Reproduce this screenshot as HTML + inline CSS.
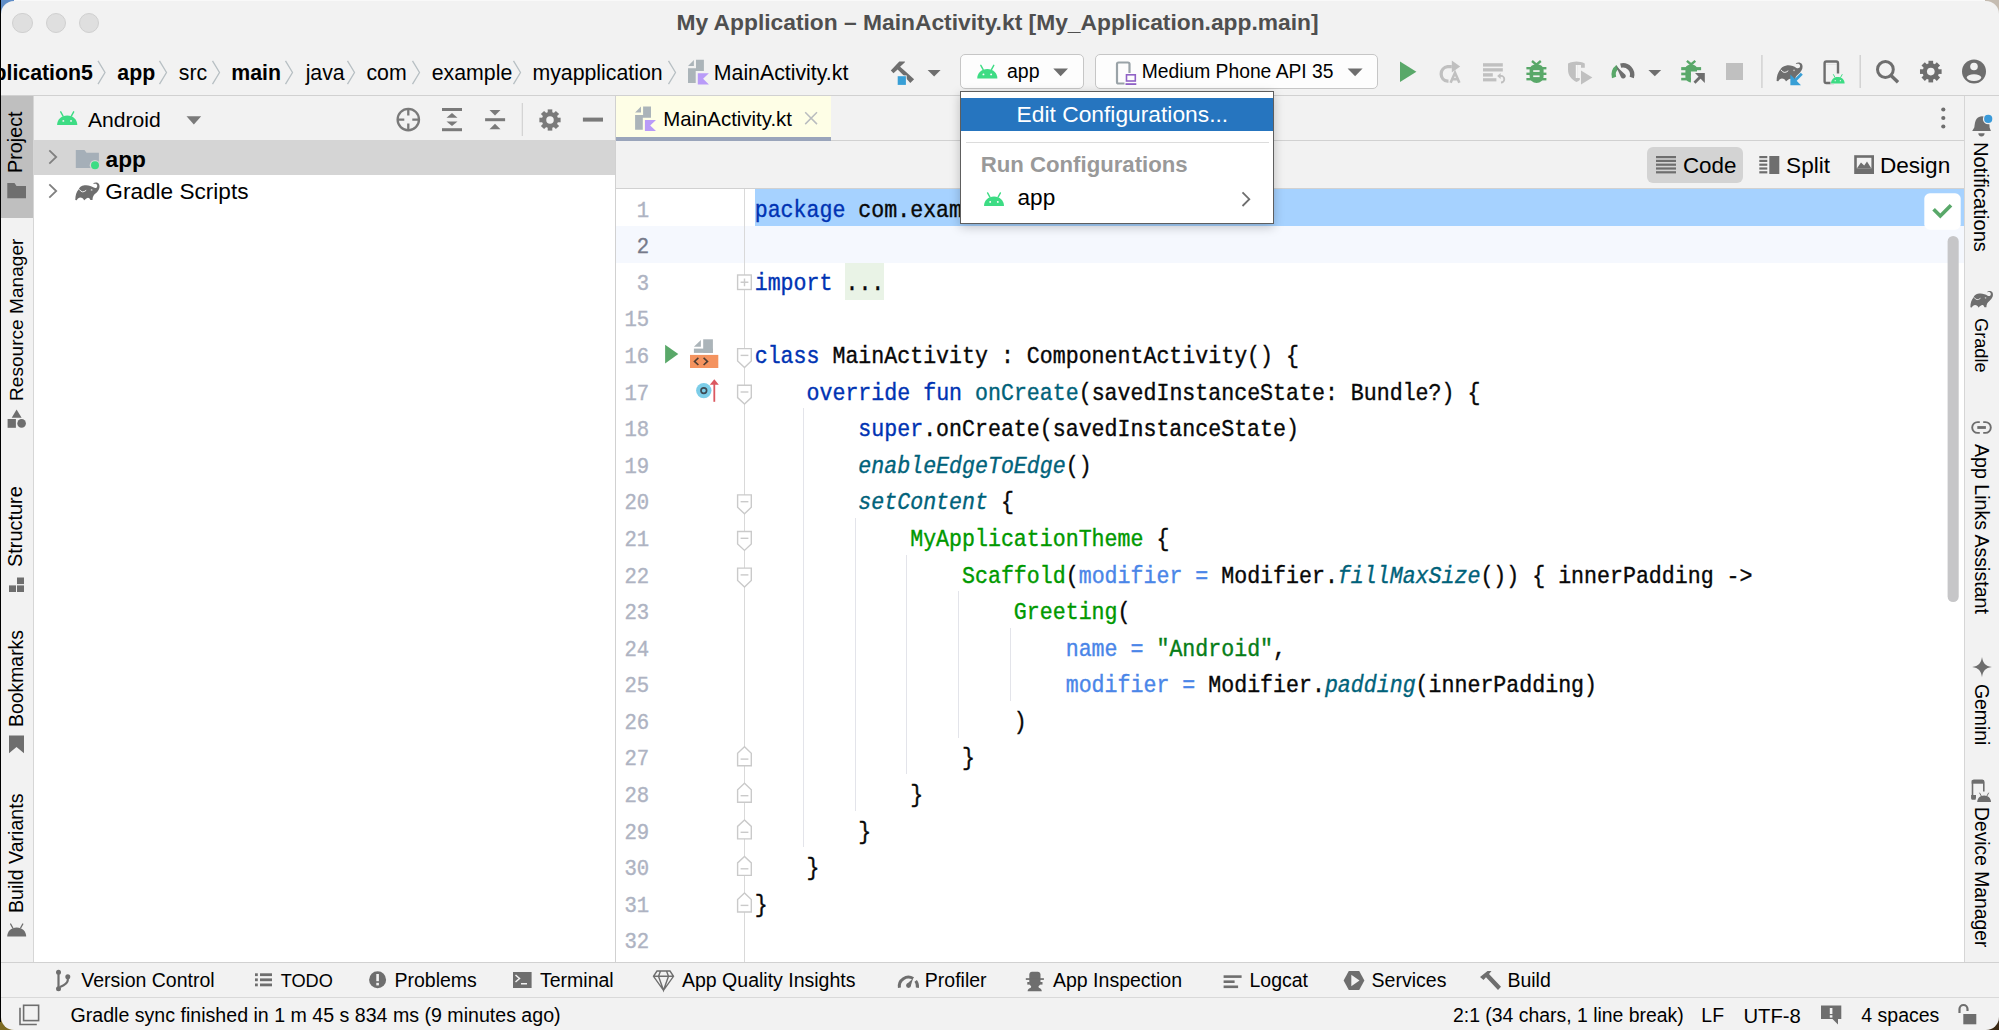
<!DOCTYPE html>
<html><head><meta charset="utf-8"><title>Android Studio</title>
<style>
html,body{margin:0;padding:0;}
body{width:1999px;height:1030px;overflow:hidden;position:relative;background:#f2f2f2;font-family:'Liberation Sans', sans-serif;}
.code{position:absolute;font-family:'Liberation Mono', monospace;white-space:pre;color:#080808;-webkit-text-stroke:0.35px currentColor;}
.code span{-webkit-text-stroke:0.35px currentColor;}
</style></head><body>
<div style="position:absolute;left:1px;top:0px;width:16px;height:16px;background:#5f8dc7;"></div>
<div style="position:absolute;left:1983px;top:0px;width:16px;height:16px;background:#c5bcb1;"></div>
<div style="position:absolute;left:0px;top:1014px;width:16px;height:16px;background:#7d6b22;"></div>
<div style="position:absolute;left:1983px;top:1014px;width:16px;height:16px;background:#3b2a14;"></div>
<div style="position:absolute;left:1px;top:1px;width:1998px;height:1029px;background:#f2f2f2;border-radius:13px;"></div>
<div style="position:absolute;left:0px;top:0px;width:1px;height:1022px;background:#000;"></div>
<div style="position:absolute;left:14px;top:0px;width:1971px;height:1px;background:#f9f9f9;"></div>
<div style="position:absolute;left:12.2px;top:12.9px;width:18.4px;height:18.4px;border-radius:50%;background:#dfdfdf;border:0.8px solid #d0d0d0;"></div>
<div style="position:absolute;left:45.8px;top:12.9px;width:18.4px;height:18.4px;border-radius:50%;background:#dfdfdf;border:0.8px solid #d0d0d0;"></div>
<div style="position:absolute;left:78.8px;top:12.9px;width:18.4px;height:18.4px;border-radius:50%;background:#dfdfdf;border:0.8px solid #d0d0d0;"></div>
<div style="position:absolute;left:676.43px;top:11.20px;font-family:'Liberation Sans';font-size:22.8px;line-height:22.8px;font-weight:700;color:#4f4f4f;white-space:pre;">My Application – MainActivity.kt [My_Application.app.main]</div>
<div style="position:absolute;left:1px;top:95px;width:1998px;height:1px;background:#d1d1d1;"></div>
<div style="position:absolute;left:33px;top:96px;width:1px;height:866px;background:#d6d6d6;"></div>
<div style="position:absolute;left:1px;top:96px;width:32px;height:122px;background:#bfbfbf;"></div>
<div style="position:absolute;left:34px;top:140px;width:581px;height:822px;background:#ffffff;"></div>
<div style="position:absolute;left:34px;top:140px;width:581px;height:35px;background:#d5d5d5;"></div>
<div style="position:absolute;left:615px;top:96px;width:1px;height:866px;background:#d1d1d1;"></div>
<div style="position:absolute;left:616px;top:96px;width:215px;height:41px;background:#fefee6;"></div>
<div style="position:absolute;left:616px;top:137px;width:215px;height:4px;background:#9aa5bb;"></div>
<div style="position:absolute;left:831px;top:140px;width:1133px;height:1px;background:#d1d1d1;"></div>
<div style="position:absolute;left:616px;top:188px;width:1348px;height:1px;background:#d1d1d1;"></div>
<div style="position:absolute;left:616px;top:189px;width:1348px;height:773px;background:#ffffff;"></div>
<div style="position:absolute;left:1964px;top:96px;width:1px;height:866px;background:#d6d6d6;"></div>
<div style="position:absolute;left:1px;top:962px;width:1998px;height:1px;background:#d1d1d1;"></div>
<div style="position:absolute;left:1px;top:997px;width:1998px;height:1px;background:#d9d9d9;"></div>
<div style="position:absolute;left:-6.56px;top:62.77px;font-family:'Liberation Sans';font-size:21.3px;line-height:21.3px;font-weight:700;color:#000;white-space:pre;">plication5</div>
<div style="position:absolute;left:117.37px;top:62.77px;font-family:'Liberation Sans';font-size:21.3px;line-height:21.3px;font-weight:700;color:#000;white-space:pre;">app</div>
<div style="position:absolute;left:178.87px;top:62.77px;font-family:'Liberation Sans';font-size:21.3px;line-height:21.3px;font-weight:400;color:#000;white-space:pre;">src</div>
<div style="position:absolute;left:231.32px;top:62.77px;font-family:'Liberation Sans';font-size:21.3px;line-height:21.3px;font-weight:700;color:#000;white-space:pre;">main</div>
<div style="position:absolute;left:305.64px;top:62.77px;font-family:'Liberation Sans';font-size:21.3px;line-height:21.3px;font-weight:400;color:#000;white-space:pre;">java</div>
<div style="position:absolute;left:366.45px;top:62.77px;font-family:'Liberation Sans';font-size:21.3px;line-height:21.3px;font-weight:400;color:#000;white-space:pre;">com</div>
<div style="position:absolute;left:431.75px;top:62.77px;font-family:'Liberation Sans';font-size:21.3px;line-height:21.3px;font-weight:400;color:#000;white-space:pre;">example</div>
<div style="position:absolute;left:532.42px;top:62.77px;font-family:'Liberation Sans';font-size:21.3px;line-height:21.3px;font-weight:400;color:#000;white-space:pre;">myapplication</div>
<div style="position:absolute;left:713.80px;top:62.77px;font-family:'Liberation Sans';font-size:21.3px;line-height:21.3px;font-weight:400;color:#000;white-space:pre;">MainActivity.kt</div>
<div style="position:absolute;left:959.5px;top:53.5px;width:122px;height:33px;border:1.5px solid #c6c6c6;border-radius:5px;background:#fdfdfd;"></div>
<div style="position:absolute;left:1094.5px;top:53.5px;width:281px;height:33px;border:1.5px solid #c6c6c6;border-radius:5px;background:#fdfdfd;"></div>
<div style="position:absolute;left:1007.02px;top:61.89px;font-family:'Liberation Sans';font-size:19.5px;line-height:19.5px;font-weight:400;color:#000;white-space:pre;">app</div>
<div style="position:absolute;left:1141.66px;top:62.16px;font-family:'Liberation Sans';font-size:19.3px;line-height:19.3px;font-weight:400;color:#000;white-space:pre;">Medium Phone API 35</div>
<div style="position:absolute;left:88.00px;top:109.44px;font-family:'Liberation Sans';font-size:21.1px;line-height:21.1px;font-weight:400;color:#000;white-space:pre;">Android</div>
<div style="position:absolute;left:105.55px;top:147.98px;font-family:'Liberation Sans';font-size:22.7px;line-height:22.7px;font-weight:700;color:#000;white-space:pre;">app</div>
<div style="position:absolute;left:105.37px;top:181.07px;font-family:'Liberation Sans';font-size:22.6px;line-height:22.6px;font-weight:400;color:#000;white-space:pre;">Gradle Scripts</div>
<div style="position:absolute;left:663.17px;top:108.53px;font-family:'Liberation Sans';font-size:20.4px;line-height:20.4px;font-weight:400;color:#000;white-space:pre;">MainActivity.kt</div>
<div style="position:absolute;left:1646.5px;top:146.5px;width:96px;height:36px;border-radius:6px;background:#d3d3d3;"></div>
<div style="position:absolute;left:1682.88px;top:155.44px;font-family:'Liberation Sans';font-size:22.4px;line-height:22.4px;font-weight:400;color:#000;white-space:pre;">Code</div>
<div style="position:absolute;left:1786.10px;top:155.27px;font-family:'Liberation Sans';font-size:22.6px;line-height:22.6px;font-weight:400;color:#000;white-space:pre;">Split</div>
<div style="position:absolute;left:1879.89px;top:155.27px;font-family:'Liberation Sans';font-size:22.6px;line-height:22.6px;font-weight:400;color:#000;white-space:pre;">Design</div>
<div style="position:absolute;left:81.30px;top:971.19px;font-family:'Liberation Sans';font-size:19.5px;line-height:19.5px;font-weight:400;color:#000;white-space:pre;">Version Control</div>
<div style="position:absolute;left:280.64px;top:972.29px;font-family:'Liberation Sans';font-size:18.2px;line-height:18.2px;font-weight:400;color:#000;white-space:pre;">TODO</div>
<div style="position:absolute;left:394.44px;top:971.19px;font-family:'Liberation Sans';font-size:19.5px;line-height:19.5px;font-weight:400;color:#000;white-space:pre;">Problems</div>
<div style="position:absolute;left:540.01px;top:971.19px;font-family:'Liberation Sans';font-size:19.5px;line-height:19.5px;font-weight:400;color:#000;white-space:pre;">Terminal</div>
<div style="position:absolute;left:682.00px;top:971.19px;font-family:'Liberation Sans';font-size:19.5px;line-height:19.5px;font-weight:400;color:#000;white-space:pre;">App Quality Insights</div>
<div style="position:absolute;left:924.84px;top:971.19px;font-family:'Liberation Sans';font-size:19.5px;line-height:19.5px;font-weight:400;color:#000;white-space:pre;">Profiler</div>
<div style="position:absolute;left:1053.00px;top:971.19px;font-family:'Liberation Sans';font-size:19.5px;line-height:19.5px;font-weight:400;color:#000;white-space:pre;">App Inspection</div>
<div style="position:absolute;left:1249.44px;top:971.19px;font-family:'Liberation Sans';font-size:19.5px;line-height:19.5px;font-weight:400;color:#000;white-space:pre;">Logcat</div>
<div style="position:absolute;left:1371.62px;top:971.19px;font-family:'Liberation Sans';font-size:19.5px;line-height:19.5px;font-weight:400;color:#000;white-space:pre;">Services</div>
<div style="position:absolute;left:1507.44px;top:971.19px;font-family:'Liberation Sans';font-size:19.5px;line-height:19.5px;font-weight:400;color:#000;white-space:pre;">Build</div>
<div style="position:absolute;left:70.52px;top:1006.11px;font-family:'Liberation Sans';font-size:19.6px;line-height:19.6px;font-weight:400;color:#000;white-space:pre;">Gradle sync finished in 1 m 45 s 834 ms (9 minutes ago)</div>
<div style="position:absolute;left:1453.03px;top:1006.28px;font-family:'Liberation Sans';font-size:19.4px;line-height:19.4px;font-weight:400;color:#000;white-space:pre;">2:1 (34 chars, 1 line break)</div>
<div style="position:absolute;left:1701.35px;top:1006.28px;font-family:'Liberation Sans';font-size:19.4px;line-height:19.4px;font-weight:400;color:#000;white-space:pre;">LF</div>
<div style="position:absolute;left:1743.38px;top:1005.52px;font-family:'Liberation Sans';font-size:20.3px;line-height:20.3px;font-weight:400;color:#000;white-space:pre;">UTF-8</div>
<div style="position:absolute;left:1861.31px;top:1006.19px;font-family:'Liberation Sans';font-size:19.5px;line-height:19.5px;font-weight:400;color:#000;white-space:pre;">4 spaces</div>
<div style="position:absolute;left:6.44px;top:173.28px;transform:rotate(-90deg);transform-origin:0 0;font-family:'Liberation Sans';font-size:19.8px;line-height:19.8px;font-weight:400;color:#000;white-space:pre;">Project</div>
<div style="position:absolute;left:7.03px;top:400.93px;transform:rotate(-90deg);transform-origin:0 0;font-family:'Liberation Sans';font-size:19.1px;line-height:19.1px;font-weight:400;color:#000;white-space:pre;">Resource Manager</div>
<div style="position:absolute;left:6.35px;top:566.70px;transform:rotate(-90deg);transform-origin:0 0;font-family:'Liberation Sans';font-size:19.9px;line-height:19.9px;font-weight:400;color:#000;white-space:pre;">Structure</div>
<div style="position:absolute;left:6.78px;top:726.95px;transform:rotate(-90deg);transform-origin:0 0;font-family:'Liberation Sans';font-size:19.4px;line-height:19.4px;font-weight:400;color:#000;white-space:pre;">Bookmarks</div>
<div style="position:absolute;left:6.61px;top:913.47px;transform:rotate(-90deg);transform-origin:0 0;font-family:'Liberation Sans';font-size:19.6px;line-height:19.6px;font-weight:400;color:#000;white-space:pre;">Build Variants</div>
<div style="position:absolute;left:1991.30px;top:142.18px;transform:rotate(90deg);transform-origin:0 0;font-family:'Liberation Sans';font-size:20.2px;line-height:20.2px;font-weight:400;color:#000;white-space:pre;">Notifications</div>
<div style="position:absolute;left:1989.61px;top:318.39px;transform:rotate(90deg);transform-origin:0 0;font-family:'Liberation Sans';font-size:18.2px;line-height:18.2px;font-weight:400;color:#000;white-space:pre;">Gradle</div>
<div style="position:absolute;left:1990.79px;top:443.50px;transform:rotate(90deg);transform-origin:0 0;font-family:'Liberation Sans';font-size:19.6px;line-height:19.6px;font-weight:400;color:#000;white-space:pre;">App Links Assistant</div>
<div style="position:absolute;left:1990.62px;top:684.03px;transform:rotate(90deg);transform-origin:0 0;font-family:'Liberation Sans';font-size:19.4px;line-height:19.4px;font-weight:400;color:#000;white-space:pre;">Gemini</div>
<div style="position:absolute;left:1990.54px;top:807.46px;transform:rotate(90deg);transform-origin:0 0;font-family:'Liberation Sans';font-size:19.3px;line-height:19.3px;font-weight:400;color:#000;white-space:pre;">Device Manager</div>
<div style="position:absolute;left:616px;top:226px;width:1348px;height:37px;background:#f5f8fe;"></div>
<div style="position:absolute;left:754.7px;top:189.0px;width:1209.3px;height:36.58px;background:#a6d2ff;"></div>
<div style="position:absolute;left:845px;top:263.2px;width:39px;height:36.4px;background:#e9f3e6;"></div>
<div class="code" style="left:754.7px;top:192.75px;font-size:21.6px;line-height:36.58px;transform:scaleY(1.07);transform-origin:0 24.05px;"><span style="color:#0033b3">package</span><span style="color:#080808"> com.example.myapplication</span></div>
<div class="code" style="left:560px;width:89.20000000000005px;text-align:right;top:193.75px;font-size:20.6px;line-height:36.58px;color:#aeb3c2;transform:scaleY(1.07);transform-origin:0 24.05px;">1</div>
<div class="code" style="left:560px;width:89.20000000000005px;text-align:right;top:230.33px;font-size:20.6px;line-height:36.58px;color:#767a8a;transform:scaleY(1.07);transform-origin:0 24.05px;">2</div>
<div class="code" style="left:754.7px;top:265.91px;font-size:21.6px;line-height:36.58px;transform:scaleY(1.07);transform-origin:0 24.05px;"><span style="color:#0033b3">import</span><span style="color:#080808"> </span><span style="color:#080808">...</span></div>
<div class="code" style="left:560px;width:89.20000000000005px;text-align:right;top:266.91px;font-size:20.6px;line-height:36.58px;color:#aeb3c2;transform:scaleY(1.07);transform-origin:0 24.05px;">3</div>
<div class="code" style="left:560px;width:89.20000000000005px;text-align:right;top:303.49px;font-size:20.6px;line-height:36.58px;color:#aeb3c2;transform:scaleY(1.07);transform-origin:0 24.05px;">15</div>
<div class="code" style="left:754.7px;top:339.07px;font-size:21.6px;line-height:36.58px;transform:scaleY(1.07);transform-origin:0 24.05px;"><span style="color:#0033b3">class</span><span style="color:#080808"> MainActivity : ComponentActivity() {</span></div>
<div class="code" style="left:560px;width:89.20000000000005px;text-align:right;top:340.07px;font-size:20.6px;line-height:36.58px;color:#aeb3c2;transform:scaleY(1.07);transform-origin:0 24.05px;">16</div>
<div class="code" style="left:754.7px;top:375.65px;font-size:21.6px;line-height:36.58px;transform:scaleY(1.07);transform-origin:0 24.05px;"><span style="color:#080808">    </span><span style="color:#0033b3">override</span><span style="color:#080808"> </span><span style="color:#0033b3">fun</span><span style="color:#080808"> </span><span style="color:#00627a">onCreate</span><span style="color:#080808">(savedInstanceState: Bundle?) {</span></div>
<div class="code" style="left:560px;width:89.20000000000005px;text-align:right;top:376.65px;font-size:20.6px;line-height:36.58px;color:#aeb3c2;transform:scaleY(1.07);transform-origin:0 24.05px;">17</div>
<div class="code" style="left:754.7px;top:412.23px;font-size:21.6px;line-height:36.58px;transform:scaleY(1.07);transform-origin:0 24.05px;"><span style="color:#080808">        </span><span style="color:#0033b3">super</span><span style="color:#080808">.onCreate(savedInstanceState)</span></div>
<div class="code" style="left:560px;width:89.20000000000005px;text-align:right;top:413.23px;font-size:20.6px;line-height:36.58px;color:#aeb3c2;transform:scaleY(1.07);transform-origin:0 24.05px;">18</div>
<div class="code" style="left:754.7px;top:448.81px;font-size:21.6px;line-height:36.58px;transform:scaleY(1.07);transform-origin:0 24.05px;"><span style="color:#080808">        </span><span style="color:#00627a;font-style:italic">enableEdgeToEdge</span><span style="color:#080808">()</span></div>
<div class="code" style="left:560px;width:89.20000000000005px;text-align:right;top:449.81px;font-size:20.6px;line-height:36.58px;color:#aeb3c2;transform:scaleY(1.07);transform-origin:0 24.05px;">19</div>
<div class="code" style="left:754.7px;top:485.39px;font-size:21.6px;line-height:36.58px;transform:scaleY(1.07);transform-origin:0 24.05px;"><span style="color:#080808">        </span><span style="color:#00627a;font-style:italic">setContent</span><span style="color:#080808"> {</span></div>
<div class="code" style="left:560px;width:89.20000000000005px;text-align:right;top:486.39px;font-size:20.6px;line-height:36.58px;color:#aeb3c2;transform:scaleY(1.07);transform-origin:0 24.05px;">20</div>
<div class="code" style="left:754.7px;top:521.97px;font-size:21.6px;line-height:36.58px;transform:scaleY(1.07);transform-origin:0 24.05px;"><span style="color:#080808">            </span><span style="color:#009900">MyApplicationTheme</span><span style="color:#080808"> {</span></div>
<div class="code" style="left:560px;width:89.20000000000005px;text-align:right;top:522.97px;font-size:20.6px;line-height:36.58px;color:#aeb3c2;transform:scaleY(1.07);transform-origin:0 24.05px;">21</div>
<div class="code" style="left:754.7px;top:558.55px;font-size:21.6px;line-height:36.58px;transform:scaleY(1.07);transform-origin:0 24.05px;"><span style="color:#080808">                </span><span style="color:#009900">Scaffold</span><span style="color:#080808">(</span><span style="color:#4a86e8">modifier =</span><span style="color:#080808"> Modifier.</span><span style="color:#00627a;font-style:italic">fillMaxSize</span><span style="color:#080808">()) { innerPadding -&gt;</span></div>
<div class="code" style="left:560px;width:89.20000000000005px;text-align:right;top:559.55px;font-size:20.6px;line-height:36.58px;color:#aeb3c2;transform:scaleY(1.07);transform-origin:0 24.05px;">22</div>
<div class="code" style="left:754.7px;top:595.13px;font-size:21.6px;line-height:36.58px;transform:scaleY(1.07);transform-origin:0 24.05px;"><span style="color:#080808">                    </span><span style="color:#009900">Greeting</span><span style="color:#080808">(</span></div>
<div class="code" style="left:560px;width:89.20000000000005px;text-align:right;top:596.13px;font-size:20.6px;line-height:36.58px;color:#aeb3c2;transform:scaleY(1.07);transform-origin:0 24.05px;">23</div>
<div class="code" style="left:754.7px;top:631.71px;font-size:21.6px;line-height:36.58px;transform:scaleY(1.07);transform-origin:0 24.05px;"><span style="color:#080808">                        </span><span style="color:#4a86e8">name =</span><span style="color:#080808"> </span><span style="color:#067d17">&quot;Android&quot;</span><span style="color:#080808">,</span></div>
<div class="code" style="left:560px;width:89.20000000000005px;text-align:right;top:632.71px;font-size:20.6px;line-height:36.58px;color:#aeb3c2;transform:scaleY(1.07);transform-origin:0 24.05px;">24</div>
<div class="code" style="left:754.7px;top:668.29px;font-size:21.6px;line-height:36.58px;transform:scaleY(1.07);transform-origin:0 24.05px;"><span style="color:#080808">                        </span><span style="color:#4a86e8">modifier =</span><span style="color:#080808"> Modifier.</span><span style="color:#00627a;font-style:italic">padding</span><span style="color:#080808">(innerPadding)</span></div>
<div class="code" style="left:560px;width:89.20000000000005px;text-align:right;top:669.29px;font-size:20.6px;line-height:36.58px;color:#aeb3c2;transform:scaleY(1.07);transform-origin:0 24.05px;">25</div>
<div class="code" style="left:754.7px;top:704.87px;font-size:21.6px;line-height:36.58px;transform:scaleY(1.07);transform-origin:0 24.05px;"><span style="color:#080808">                    )</span></div>
<div class="code" style="left:560px;width:89.20000000000005px;text-align:right;top:705.87px;font-size:20.6px;line-height:36.58px;color:#aeb3c2;transform:scaleY(1.07);transform-origin:0 24.05px;">26</div>
<div class="code" style="left:754.7px;top:741.45px;font-size:21.6px;line-height:36.58px;transform:scaleY(1.07);transform-origin:0 24.05px;"><span style="color:#080808">                }</span></div>
<div class="code" style="left:560px;width:89.20000000000005px;text-align:right;top:742.45px;font-size:20.6px;line-height:36.58px;color:#aeb3c2;transform:scaleY(1.07);transform-origin:0 24.05px;">27</div>
<div class="code" style="left:754.7px;top:778.03px;font-size:21.6px;line-height:36.58px;transform:scaleY(1.07);transform-origin:0 24.05px;"><span style="color:#080808">            }</span></div>
<div class="code" style="left:560px;width:89.20000000000005px;text-align:right;top:779.03px;font-size:20.6px;line-height:36.58px;color:#aeb3c2;transform:scaleY(1.07);transform-origin:0 24.05px;">28</div>
<div class="code" style="left:754.7px;top:814.61px;font-size:21.6px;line-height:36.58px;transform:scaleY(1.07);transform-origin:0 24.05px;"><span style="color:#080808">        }</span></div>
<div class="code" style="left:560px;width:89.20000000000005px;text-align:right;top:815.61px;font-size:20.6px;line-height:36.58px;color:#aeb3c2;transform:scaleY(1.07);transform-origin:0 24.05px;">29</div>
<div class="code" style="left:754.7px;top:851.19px;font-size:21.6px;line-height:36.58px;transform:scaleY(1.07);transform-origin:0 24.05px;"><span style="color:#080808">    }</span></div>
<div class="code" style="left:560px;width:89.20000000000005px;text-align:right;top:852.19px;font-size:20.6px;line-height:36.58px;color:#aeb3c2;transform:scaleY(1.07);transform-origin:0 24.05px;">30</div>
<div class="code" style="left:754.7px;top:887.77px;font-size:21.6px;line-height:36.58px;transform:scaleY(1.07);transform-origin:0 24.05px;"><span style="color:#080808">}</span></div>
<div class="code" style="left:560px;width:89.20000000000005px;text-align:right;top:888.77px;font-size:20.6px;line-height:36.58px;color:#aeb3c2;transform:scaleY(1.07);transform-origin:0 24.05px;">31</div>
<div class="code" style="left:560px;width:89.20000000000005px;text-align:right;top:925.35px;font-size:20.6px;line-height:36.58px;color:#aeb3c2;transform:scaleY(1.07);transform-origin:0 24.05px;">32</div>
<div style="position:absolute;left:744px;top:189px;width:1.4px;height:773px;background:#d9d9d9;"></div>
<div style="position:absolute;left:802.6px;top:408.48px;width:1.2px;height:438.96px;background:#e3e4ea;"></div>
<div style="position:absolute;left:854.5px;top:518.22px;width:1.2px;height:292.64px;background:#e3e4ea;"></div>
<div style="position:absolute;left:906.3px;top:554.8px;width:1.2px;height:219.48px;background:#e3e4ea;"></div>
<div style="position:absolute;left:958.2px;top:591.38px;width:1.2px;height:146.32px;background:#e3e4ea;"></div>
<div style="position:absolute;left:1010.0px;top:627.96px;width:1.2px;height:73.16px;background:#e3e4ea;"></div>
<svg style="position:absolute;left:0;top:0" width="1999" height="1030"><polyline points="98,60.8 105,72.5 98,84.2" fill="none" stroke="#b7bfc3" stroke-width="1.3"/><polyline points="159.5,60.8 166.5,72.5 159.5,84.2" fill="none" stroke="#b7bfc3" stroke-width="1.3"/><polyline points="212.5,60.8 219.5,72.5 212.5,84.2" fill="none" stroke="#b7bfc3" stroke-width="1.3"/><polyline points="285.5,60.8 292.5,72.5 285.5,84.2" fill="none" stroke="#b7bfc3" stroke-width="1.3"/><polyline points="347.5,60.8 354.5,72.5 347.5,84.2" fill="none" stroke="#b7bfc3" stroke-width="1.3"/><polyline points="412.5,60.8 419.5,72.5 412.5,84.2" fill="none" stroke="#b7bfc3" stroke-width="1.3"/><polyline points="513.5,60.8 520.5,72.5 513.5,84.2" fill="none" stroke="#b7bfc3" stroke-width="1.3"/><polyline points="668.5,60.8 675.5,72.5 668.5,84.2" fill="none" stroke="#b7bfc3" stroke-width="1.3"/><g transform="translate(688.0,59.8) scale(1.0)"><polygon points="0,6.1 5.9,0.1 5.9,6.1" fill="#abb4b9"/><path d="M8,0 H15.9 V11.2 H7.7 V23.2 H0 V8.5 H8 Z" fill="#abb4b9"/><path d="M9.8,13.4 H20.9 L15.1,19 L20.9,24.6 H9.8 Z" fill="#b99bf8"/></g><g transform="translate(635.1,106.5) scale(1.0)"><polygon points="0,6.1 5.9,0.1 5.9,6.1" fill="#abb4b9"/><path d="M8,0 H15.9 V11.2 H7.7 V23.2 H0 V8.5 H8 Z" fill="#abb4b9"/><path d="M9.8,13.4 H20.9 L15.1,19 L20.9,24.6 H9.8 Z" fill="#b99bf8"/></g><polygon points="890.8,70.5 899.3,61.6 904.9,61.5 904.9,62.2 900.1,66.8 906.1,72 914.1,79.3 910.3,82.9 902.7,74.6 897.6,69.5 893.5,73.2" fill="#6e6e6e"/><rect x="896.9" y="75.4" width="9.8" height="10.3" fill="#f2f2f2"/><rect x="897.7" y="76.2" width="8.2" height="8.7" fill="#389fd6"/><polygon points="927.6,70.1 940.6,70.1 934.1,76.4" fill="#6e6e6e"/><g transform="translate(977.2,64.9) scale(1.0100)"><path d="M0,13.5 C0,8 4.3,4 10,4 C15.7,4 20,8 20,13.5 Z" fill="#3ddc84"/><path d="M3.6,0.4 L5.9,4.6 M16.4,0.4 L14.1,4.6" stroke="#3ddc84" stroke-width="1.4" stroke-linecap="round"/><circle cx="6.2" cy="9.4" r="0.95" fill="#fdfdfd"/><circle cx="13.8" cy="9.4" r="0.95" fill="#fdfdfd"/></g><polygon points="1053.3,68.4 1068.0,68.4 1060.65,76.2" fill="#6e6e6e"/><rect x="1117" y="62.5" width="12.5" height="21" rx="1.6" fill="none" stroke="#9aa3a8" stroke-width="2.2"/><rect x="1124.5" y="73" width="12" height="13" fill="#fdfdfd"/><rect x="1126.5" y="74.8" width="8.8" height="6.2" fill="none" stroke="#9062c6" stroke-width="1.6"/><rect x="1125.5" y="83.2" width="10.8" height="1.8" fill="#9062c6"/><polygon points="1347.6,68.4 1362.6,68.4 1355.1,76.2" fill="#6e6e6e"/><polygon points="1400,61.6 1416.4,71.8 1400,81.9" fill="#59a869"/><path d="M1451.8,66.7 H1447.6 A7.3,7.3 0 0 0 1447.6,81.2 H1448.5" fill="none" stroke="#c0c0c0" stroke-width="3.3"/><polygon points="1451.8,60.4 1460.2,66.5 1451.8,72.6" fill="#c0c0c0"/><path d="M1450.6,82.8 L1455,72.8 L1459.4,82.8 M1452.3,79.2 H1457.7" fill="none" stroke="#c0c0c0" stroke-width="2.6"/><g fill="#c0c0c0"><rect x="1483" y="63.2" width="19.8" height="3.4"/><rect x="1483" y="68.2" width="19.8" height="3.3"/><rect x="1483" y="73.2" width="9.8" height="3.4"/><rect x="1483" y="78.2" width="13.4" height="3.2"/><polygon points="1497.2,75.9 1500.6,72.9 1500.6,78.9"/></g><path d="M1499.5,75.9 H1501 A3.3,3.3 0 0 1 1501,82.5" fill="none" stroke="#c0c0c0" stroke-width="1.8"/><g transform="translate(1526.4,60.2) scale(1.0) translate(-1526.4,-60.2)" fill="#59a869"><path d="M1532,61 L1536.4,64.6 L1540.8,61" fill="none" stroke="#59a869" stroke-width="2.4"/><path d="M1529.6,70 C1529.6,66.5 1532.5,64.2 1536.6,64.2 C1540.7,64.2 1543.6,66.5 1543.6,70 V76 C1543.6,80 1540.5,82.9 1536.6,82.9 C1532.7,82.9 1529.6,80 1529.6,76 Z"/><rect x="1526.4" y="67" width="20" height="2.4"/><rect x="1526.4" y="72.6" width="20" height="2.4"/><rect x="1526.4" y="78" width="20" height="2.4"/><rect x="1533.2" y="70.2" width="6.4" height="1.7" fill="#f2f2f2"/><rect x="1533.2" y="75.4" width="6.4" height="1.7" fill="#f2f2f2"/></g><path d="M1568,63.4 C1571,62.3 1574,61.8 1576.4,61.6 C1579.5,61.8 1582,62.3 1584.8,63.4 V67.8 H1581 V65 H1577.2 V78 H1579.8 V80 C1578.7,81 1577.5,81.6 1576.4,82 C1571.5,79.5 1568,75.5 1568,69.5 Z" fill="#c0c0c0"/><rect x="1575.8" y="65" width="1.4" height="13" fill="#f7f7f7"/><polygon points="1581,70.4 1592.4,77.4 1581,84.6" fill="#c0c0c0"/><path d="M1614.06,77.47 A9.3,9.3 0 0 1 1617.70,66.89" fill="none" stroke="#59a869" stroke-width="4.4"/><path d="M1620.65,65.58 A9.3,9.3 0 0 1 1631.74,77.47" fill="none" stroke="#6e6e6e" stroke-width="4.4"/><path d="M1615.6,65.6 L1621,77.2 A2.5,2.5 0 0 0 1625.4,74.8 Z" fill="#6e6e6e"/><polygon points="1648.4,70 1661.2,70 1654.8000000000002,76.3" fill="#6e6e6e"/><g fill="#59a869"><path d="M1686.9,60.8 L1691.1,64.4 L1695.3,60.8" fill="none" stroke="#59a869" stroke-width="2.4"/><path d="M1685.4,70.2 V68.5 C1685.4,66.5 1688,64.6 1691.2,64.6 C1694.4,64.6 1697,66.5 1697,68.5 V71.5 H1690.9 V82.6 C1687.5,82 1685.4,79.5 1685.4,77 Z"/><rect x="1681.2" y="67.1" width="19.9" height="3.1"/><rect x="1681.2" y="72.6" width="9.7" height="2.7"/><rect x="1681.2" y="77.8" width="9.7" height="2.6"/></g><path d="M1694.5,82.7 L1702.2,75" stroke="#f2f2f2" stroke-width="5"/><polygon points="1693.6,72.1 1705.8,72.1 1705.8,84" fill="#f2f2f2"/><path d="M1694.5,82.7 L1702.2,75" stroke="#6e6e6e" stroke-width="2.9"/><polygon points="1695,73.1 1704.8,73.1 1704.8,82.9" fill="#6e6e6e"/><rect x="1726" y="63" width="17" height="17" fill="#c0c0c0"/><rect x="1761.2" y="55" width="1.4" height="33" fill="#d0d0d0"/><rect x="1859.5" y="55" width="1.4" height="33" fill="#d0d0d0"/><g transform="translate(1776.6,62.1) scale(1.07) translate(-3.3,-4.0)"><path fill="#6e6e6e" d="M3.3,21.7 C3.3,17 4.5,13.5 6.8,11 C7.2,9.5 9,7.6 12.6,7.1 C16,6.6 19.5,7.8 21.8,9.4 C23.5,10.3 25.5,9.5 25.2,7.2 C25,5.6 23.2,5.1 21.8,5.8 L21.2,5.3 C22.5,4 25.5,3.8 26.9,5.8 C28.5,8.5 27.2,12.5 23.5,15.3 C21.8,16.5 20.5,18.5 20.5,21.7 H18.4 C17.8,20.2 17,19.5 16,19.5 C15,19.5 13.9,20.5 12.3,22 H12 C11.5,20.5 10,19.4 8.3,19.4 C7,19.4 5.5,20.5 4.8,22 Z"/><path d="M7.4,11.2 Q10,15.6 14.2,12.1" fill="none" stroke="#f2f2f2" stroke-width="0.9"/><circle cx="19.6" cy="11.7" r="0.9" fill="#f2f2f2" opacity="0.6"/></g><rect x="1789" y="72" width="14" height="14" fill="#f2f2f2" opacity="0"/><path d="M1801.8,73.8 L1792.5,83" stroke="#389fd6" stroke-width="2.8"/><polygon points="1790.4,74.5 1790.4,85.2 1801,85.2 " fill="#389fd6"/><path d="M1834,83 H1826.3 C1825.4,83 1824.6,82.2 1824.6,81.3 V63.2 C1824.6,62.3 1825.4,61.5 1826.3,61.5 H1836.3 C1837.2,61.5 1838,62.3 1838,63.2 V74" fill="none" stroke="#6e6e6e" stroke-width="2.4"/><rect x="1826" y="64.8" width="10.6" height="0.1" fill="#6e6e6e"/><rect x="1830.5" y="73.5" width="15" height="11" fill="#f2f2f2"/><g transform="translate(1831,74.3) scale(0.6800)"><path d="M0,13.5 C0,8 4.3,4 10,4 C15.7,4 20,8 20,13.5 Z" fill="#3ddc84"/><path d="M3.6,0.4 L5.9,4.6 M16.4,0.4 L14.1,4.6" stroke="#3ddc84" stroke-width="1.4" stroke-linecap="round"/><circle cx="6.2" cy="9.4" r="0.95" fill="#f2f2f2"/><circle cx="13.8" cy="9.4" r="0.95" fill="#f2f2f2"/></g><circle cx="1885.4" cy="69.5" r="7.9" fill="none" stroke="#6e6e6e" stroke-width="3"/><path d="M1891,75.5 L1898,82.2" stroke="#6e6e6e" stroke-width="3.4"/><g transform="translate(1930.8,71.6)" fill="#6e6e6e"><circle r="8.27"/><rect x="-2.33" y="-10.81" width="4.66" height="5.30" transform="rotate(0)"/><rect x="-2.33" y="-10.81" width="4.66" height="5.30" transform="rotate(45)"/><rect x="-2.33" y="-10.81" width="4.66" height="5.30" transform="rotate(90)"/><rect x="-2.33" y="-10.81" width="4.66" height="5.30" transform="rotate(135)"/><rect x="-2.33" y="-10.81" width="4.66" height="5.30" transform="rotate(180)"/><rect x="-2.33" y="-10.81" width="4.66" height="5.30" transform="rotate(225)"/><rect x="-2.33" y="-10.81" width="4.66" height="5.30" transform="rotate(270)"/><rect x="-2.33" y="-10.81" width="4.66" height="5.30" transform="rotate(315)"/><circle r="3.82" fill="#f2f2f2"/></g><circle cx="1974" cy="71.5" r="12" fill="#6e6e6e"/><circle cx="1974" cy="66.5" r="3.8" fill="#f2f2f2"/><ellipse cx="1974" cy="77.6" rx="7.2" ry="3.4" fill="#f2f2f2"/><g transform="translate(57.1,111.4) scale(1.0100)"><path d="M0,13.5 C0,8 4.3,4 10,4 C15.7,4 20,8 20,13.5 Z" fill="#3ddc84"/><path d="M3.6,0.4 L5.9,4.6 M16.4,0.4 L14.1,4.6" stroke="#3ddc84" stroke-width="1.4" stroke-linecap="round"/><circle cx="6.2" cy="9.4" r="0.95" fill="#f2f2f2"/><circle cx="13.8" cy="9.4" r="0.95" fill="#f2f2f2"/></g><polygon points="186.5,116.2 201.2,116.2 193.85,124.6" fill="#7a7a7a"/><circle cx="408.3" cy="119.6" r="10.7" fill="none" stroke="#7a7a7a" stroke-width="2.3"/><path d="M408.3,108.5 V115.6 M408.3,123.6 V130.7 M397.2,119.6 H404.3 M412.3,119.6 H419.4" stroke="#7a7a7a" stroke-width="2.3"/><g fill="#7a7a7a"><rect x="442" y="108" width="20" height="3"/><rect x="442" y="128.2" width="20" height="3"/><polygon points="446.5,117.8 457.5,117.8 452,113.1"/><polygon points="446.5,121.4 457.5,121.4 452,126.1"/></g><g fill="#7a7a7a"><rect x="485.1" y="118.2" width="20" height="3"/><polygon points="489.5,110 500.5,110 495,115.5"/><polygon points="489.5,129.3 500.5,129.3 495,123.8"/></g><rect x="521.7" y="103" width="1.3" height="33" fill="#d4d4d4"/><g transform="translate(550,120)" fill="#7a7a7a"><circle r="8.11"/><rect x="-2.29" y="-10.61" width="4.58" height="5.20" transform="rotate(0)"/><rect x="-2.29" y="-10.61" width="4.58" height="5.20" transform="rotate(45)"/><rect x="-2.29" y="-10.61" width="4.58" height="5.20" transform="rotate(90)"/><rect x="-2.29" y="-10.61" width="4.58" height="5.20" transform="rotate(135)"/><rect x="-2.29" y="-10.61" width="4.58" height="5.20" transform="rotate(180)"/><rect x="-2.29" y="-10.61" width="4.58" height="5.20" transform="rotate(225)"/><rect x="-2.29" y="-10.61" width="4.58" height="5.20" transform="rotate(270)"/><rect x="-2.29" y="-10.61" width="4.58" height="5.20" transform="rotate(315)"/><circle r="3.74" fill="#f2f2f2"/></g><rect x="582.9" y="117.6" width="20.1" height="4" fill="#7a7a7a"/><polyline points="49.3,150.4 56.2,157 49.3,163.6" fill="none" stroke="#808080" stroke-width="1.8"/><polyline points="49.3,184.4 56.2,191 49.3,197.6" fill="none" stroke="#808080" stroke-width="1.8"/><path d="M75.8,150 H84.5 L86.5,152.8 H98.9 V168 H75.8 Z" fill="#a5afb8"/><circle cx="95" cy="165.2" r="5.3" fill="#d5d5d5"/><circle cx="95" cy="165.2" r="4" fill="#3ddc84"/><g transform="translate(75.3,182.2) scale(1.0) translate(-3.3,-4.0)"><path fill="#6e6e6e" d="M3.3,21.7 C3.3,17 4.5,13.5 6.8,11 C7.2,9.5 9,7.6 12.6,7.1 C16,6.6 19.5,7.8 21.8,9.4 C23.5,10.3 25.5,9.5 25.2,7.2 C25,5.6 23.2,5.1 21.8,5.8 L21.2,5.3 C22.5,4 25.5,3.8 26.9,5.8 C28.5,8.5 27.2,12.5 23.5,15.3 C21.8,16.5 20.5,18.5 20.5,21.7 H18.4 C17.8,20.2 17,19.5 16,19.5 C15,19.5 13.9,20.5 12.3,22 H12 C11.5,20.5 10,19.4 8.3,19.4 C7,19.4 5.5,20.5 4.8,22 Z"/><path d="M7.4,11.2 Q10,15.6 14.2,12.1" fill="none" stroke="#ffffff" stroke-width="0.9"/><circle cx="19.6" cy="11.7" r="0.9" fill="#ffffff" opacity="0.6"/></g><path d="M805.2,112.3 L817,124.1 M817,112.3 L805.2,124.1" stroke="#b9bcbf" stroke-width="1.5"/><circle cx="1943.3" cy="109.5" r="2.1" fill="#6e6e6e"/><circle cx="1943.3" cy="118" r="2.1" fill="#6e6e6e"/><circle cx="1943.3" cy="126.5" r="2.1" fill="#6e6e6e"/><g fill="#6e6e6e"><rect x="1656" y="156.0" width="20" height="2.2"/><rect x="1656" y="159.8" width="20" height="2.2"/><rect x="1656" y="163.6" width="20" height="2.2"/><rect x="1656" y="167.4" width="20" height="2.2"/><rect x="1656" y="171.2" width="20" height="2.2"/></g><g fill="#6e6e6e"><rect x="1759.3" y="156.0" width="8" height="2.2"/><rect x="1759.3" y="159.8" width="8" height="2.2"/><rect x="1759.3" y="163.6" width="8" height="2.2"/><rect x="1759.3" y="167.4" width="8" height="2.2"/><rect x="1759.3" y="171.2" width="8" height="2.2"/><rect x="1769.3" y="156" width="10" height="18"/></g><rect x="1854.2" y="155.2" width="19.8" height="18.8" fill="#6e6e6e"/><rect x="1856.8" y="157.8" width="14.6" height="10.6" fill="#f2f2f2"/><polygon points="1856.8,168.4 1861,162.6 1864.2,165.6 1867,161.6 1871.4,168.4" fill="#6e6e6e"/><rect x="1924.3" y="193.3" width="36.4" height="36.4" rx="5.5" fill="#ffffff"/><path d="M1933.6,209.3 L1940.3,216 L1951,205.3" fill="none" stroke="#59a869" stroke-width="3.7"/><rect x="1947.6" y="236" width="11.1" height="366" rx="5.5" fill="#c6c6c8"/><polygon points="665.1,344.8 678.3,354.1 665.1,363.4" fill="#59a869"/><polygon points="693.9,346.7 700.9,340.1 700.9,346.7" fill="#abb4b9"/><rect x="703.2" y="339.3" width="9.7" height="13.6" fill="#abb4b9"/><rect x="693.9" y="348.6" width="19" height="4.3" fill="#abb4b9"/><rect x="690" y="354.9" width="28.3" height="13.1" fill="#f4935f"/><path d="M698.4,357.8 L694.5,361.4 L698.4,365 M703.6,357.8 L707.5,361.4 L703.6,365" fill="none" stroke="#4e3e33" stroke-width="1.6"/><circle cx="703.8" cy="390.6" r="7.7" fill="#7ccde8"/><circle cx="703.8" cy="390.6" r="2.8" fill="none" stroke="#3d4b55" stroke-width="1.7"/><path d="M714.3,384 V401.8" stroke="#db5860" stroke-width="1.8"/><polygon points="709.8,384.8 714.3,379.3 718.8,384.8" fill="#db5860"/><path d="M737.6,348.6 H751.3 V361.0 L744.5,367.5 L737.6,361.0 Z" fill="#fff" stroke="#cacaca" stroke-width="1.4"/><path d="M740.6,355.4 H748.4" stroke="#cacaca" stroke-width="1.4"/><path d="M737.6,385.2 H751.3 V397.6 L744.5,404.1 L737.6,397.6 Z" fill="#fff" stroke="#cacaca" stroke-width="1.4"/><path d="M740.6,392.0 H748.4" stroke="#cacaca" stroke-width="1.4"/><path d="M737.6,494.9 H751.3 V507.3 L744.5,513.8 L737.6,507.3 Z" fill="#fff" stroke="#cacaca" stroke-width="1.4"/><path d="M740.6,501.7 H748.4" stroke="#cacaca" stroke-width="1.4"/><path d="M737.6,531.5 H751.3 V543.9 L744.5,550.4 L737.6,543.9 Z" fill="#fff" stroke="#cacaca" stroke-width="1.4"/><path d="M740.6,538.3 H748.4" stroke="#cacaca" stroke-width="1.4"/><path d="M737.6,568.1 H751.3 V580.5 L744.5,587.0 L737.6,580.5 Z" fill="#fff" stroke="#cacaca" stroke-width="1.4"/><path d="M740.6,574.9 H748.4" stroke="#cacaca" stroke-width="1.4"/><path d="M737.6,765.7 H751.3 V753.2 L744.5,746.7 L737.6,753.2 Z" fill="#fff" stroke="#cacaca" stroke-width="1.4"/><path d="M740.6,759.1 H748.4" stroke="#cacaca" stroke-width="1.4"/><path d="M737.6,802.3 H751.3 V789.8 L744.5,783.3 L737.6,789.8 Z" fill="#fff" stroke="#cacaca" stroke-width="1.4"/><path d="M740.6,795.7 H748.4" stroke="#cacaca" stroke-width="1.4"/><path d="M737.6,838.9 H751.3 V826.4 L744.5,819.9 L737.6,826.4 Z" fill="#fff" stroke="#cacaca" stroke-width="1.4"/><path d="M740.6,832.3 H748.4" stroke="#cacaca" stroke-width="1.4"/><path d="M737.6,875.4 H751.3 V862.9 L744.5,856.4 L737.6,862.9 Z" fill="#fff" stroke="#cacaca" stroke-width="1.4"/><path d="M740.6,868.8 H748.4" stroke="#cacaca" stroke-width="1.4"/><path d="M737.6,912.0 H751.3 V899.5 L744.5,893.0 L737.6,899.5 Z" fill="#fff" stroke="#cacaca" stroke-width="1.4"/><path d="M740.6,905.4 H748.4" stroke="#cacaca" stroke-width="1.4"/><rect x="737.6" y="275.0" width="13.7" height="14.5" fill="#fff" stroke="#cacaca" stroke-width="1.4"/><path d="M740.6,282.3 H748.4 M744.5,278.4 V286.2" stroke="#cacaca" stroke-width="1.4"/><path d="M7.3,183 H14.5 L16.5,186 H26 V198.2 H7.3 Z" fill="#6e6e6e"/><polygon points="16.6,409.5 21.6,417.7 11.7,417.7" fill="#6e6e6e"/><rect x="7.6" y="419" width="8.3" height="8.8" fill="#6e6e6e"/><circle cx="21.6" cy="423.4" r="4.3" fill="#6e6e6e"/><g fill="#6e6e6e"><rect x="17" y="577.5" width="7" height="6.6"/><rect x="9" y="585.4" width="7" height="6.6"/><rect x="17" y="585.4" width="7" height="6.6"/></g><polygon points="9,735.6 24,735.6 24,753.3 16.5,747 9,753.3" fill="#6e6e6e"/><g transform="translate(7.2,923.6) scale(0.9500)"><path d="M0,13.5 C0,8 4.3,4 10,4 C15.7,4 20,8 20,13.5 Z" fill="#6e6e6e"/><path d="M3.6,0.4 L5.9,4.6 M16.4,0.4 L14.1,4.6" stroke="#6e6e6e" stroke-width="1.4" stroke-linecap="round"/><circle cx="6.2" cy="9.4" r="0.95" fill="#6e6e6e"/><circle cx="13.8" cy="9.4" r="0.95" fill="#6e6e6e"/></g><path d="M1972.2,131 L1974.3,127.5 C1974.8,124 1975,121 1976.5,119 C1978,117 1980,116.2 1982,116.2 C1984,116.2 1986,117.5 1987.5,119.5 C1989.5,122 1989.5,125 1989.6,127.5 L1990.9,131 Z" fill="#6e6e6e"/><path d="M1978.3,133.3 H1984.6 A3.15,3.1 0 0 1 1978.3,133.3 Z" fill="#6e6e6e"/><circle cx="1988.2" cy="118.9" r="5.3" fill="#f2f2f2"/><circle cx="1988.2" cy="118.9" r="4.1" fill="#3a9ad9"/><g transform="translate(1970.4,290.7) scale(0.93) translate(-3.3,-4.0)"><path fill="#6e6e6e" d="M3.3,21.7 C3.3,17 4.5,13.5 6.8,11 C7.2,9.5 9,7.6 12.6,7.1 C16,6.6 19.5,7.8 21.8,9.4 C23.5,10.3 25.5,9.5 25.2,7.2 C25,5.6 23.2,5.1 21.8,5.8 L21.2,5.3 C22.5,4 25.5,3.8 26.9,5.8 C28.5,8.5 27.2,12.5 23.5,15.3 C21.8,16.5 20.5,18.5 20.5,21.7 H18.4 C17.8,20.2 17,19.5 16,19.5 C15,19.5 13.9,20.5 12.3,22 H12 C11.5,20.5 10,19.4 8.3,19.4 C7,19.4 5.5,20.5 4.8,22 Z"/><path d="M7.4,11.2 Q10,15.6 14.2,12.1" fill="none" stroke="#f2f2f2" stroke-width="0.9"/><circle cx="19.6" cy="11.7" r="0.9" fill="#f2f2f2" opacity="0.6"/></g><path d="M1979.8,422.1 H1977.6 A5.4,5.4 0 0 0 1977.6,432.9 H1979.8 M1983.2,422.1 H1985.4 A5.4,5.4 0 0 1 1985.4,432.9 H1983.2" fill="none" stroke="#6e6e6e" stroke-width="1.9"/><rect x="1977.3" y="426.1" width="8.6" height="2.8" fill="#6e6e6e"/><path d="M1982,657 C1982.8,663 1985.5,666.2 1991.8,667 C1985.5,667.8 1982.8,671 1982,677.2 C1981.2,671 1978.5,667.8 1972.2,667 C1978.5,666.2 1981.2,663 1982,657 Z" fill="#6e6e6e"/><path d="M1972.5,798 V782 C1972.5,781 1973,780.2 1974,780.2 H1982.4 C1983.4,780.2 1983.8,781 1983.8,782 V793.3" fill="none" stroke="#6e6e6e" stroke-width="1.6"/><rect x="1971.7" y="780.2" width="12.1" height="3.5" fill="#6e6e6e"/><path d="M1971.1,795 H1976.8 L1975.5,799.8 H1972.5 C1971.6,799.8 1971.1,799 1971.1,798 Z" fill="#6e6e6e"/><rect x="1976" y="791.5" width="16" height="11" fill="#f2f2f2"/><g transform="translate(1977.2,792.8) scale(0.6900)"><path d="M0,13.5 C0,8 4.3,4 10,4 C15.7,4 20,8 20,13.5 Z" fill="#6e6e6e"/><path d="M3.6,0.4 L5.9,4.6 M16.4,0.4 L14.1,4.6" stroke="#6e6e6e" stroke-width="1.4" stroke-linecap="round"/><circle cx="6.2" cy="9.4" r="0.95" fill="#6e6e6e"/><circle cx="13.8" cy="9.4" r="0.95" fill="#6e6e6e"/></g><circle cx="58.5" cy="972.2" r="2.5" fill="#6e6e6e"/><circle cx="58.5" cy="988.8" r="2.5" fill="#6e6e6e"/><circle cx="67.8" cy="976.8" r="2.5" fill="#6e6e6e"/><path d="M58.5,972.2 V988.8 M67.8,976.8 V980 Q67.8,984 60,987" fill="none" stroke="#6e6e6e" stroke-width="2.2"/><g fill="#6e6e6e"><rect x="255" y="973.3" width="2.8" height="2.8"/><rect x="260" y="973.3" width="12" height="2.8"/><rect x="255" y="978.4" width="2.8" height="2.8"/><rect x="260" y="978.4" width="12" height="2.8"/><rect x="255" y="983.5" width="2.8" height="2.8"/><rect x="260" y="983.5" width="12" height="2.8"/></g><circle cx="377.6" cy="979.7" r="8.5" fill="#6e6e6e"/><rect x="376.3" y="974" width="2.6" height="7.2" fill="#f2f2f2"/><rect x="376.3" y="982.8" width="2.6" height="2.6" fill="#f2f2f2"/><rect x="513" y="972" width="18.6" height="16" fill="#6e6e6e"/><path d="M515.5,975 L519.5,978.5 L515.5,982" fill="none" stroke="#f2f2f2" stroke-width="1.5"/><rect x="521" y="983" width="6" height="1.5" fill="#f2f2f2"/><path d="M657,971 H670 L673.5,976.3 L663.5,990.3 L653.5,976.3 Z M653.5,976.3 H673.5 M660.5,971 L658.5,976.3 L663.5,990.3 L668.5,976.3 L666.5,971" fill="none" stroke="#6e6e6e" stroke-width="1.4"/><path d="M899.41,987.72 A9.1,9.1 0 0 1 913.22,978.58 M915.67,980.82 A9.1,9.1 0 0 1 917.39,987.72" fill="none" stroke="#6e6e6e" stroke-width="3"/><circle cx="908.5" cy="985.6" r="2.4" fill="#6e6e6e"/><polygon points="913,978.4 910.6,986.6 906.5,984.3" fill="#6e6e6e"/><path d="M1029.3,974.5 C1029.3,972.8 1030.5,971.7 1032,971.7 H1037.8 C1039.3,971.7 1040.5,972.8 1040.5,974.5 V983 C1040.5,984.5 1039.5,985.5 1038.5,986.2 L1038.8,987.8 C1040.5,988.3 1041.8,989.5 1041.8,991.3 H1027.6 C1027.6,989.5 1029,988.3 1030.8,987.8 L1031.2,986.2 C1030.2,985.5 1029.3,984.5 1029.3,983 Z" fill="#6e6e6e"/><rect x="1025.8" y="978.2" width="18.1" height="1.7" fill="#6e6e6e"/><rect x="1027.3" y="982" width="2.5" height="2.6" fill="#6e6e6e"/><rect x="1040" y="982" width="2.5" height="2.6" fill="#6e6e6e"/><g fill="#6e6e6e"><rect x="1223.6" y="975.3" width="18" height="2.6"/><rect x="1223.6" y="980.4" width="11" height="2.6"/><rect x="1223.6" y="985.5" width="14.5" height="2.6"/></g><polygon points="1348.8,971 1359.2,971 1364.4,980.5 1359.2,990 1348.8,990 1343.6,980.5" fill="#6e6e6e"/><polygon points="1351.3,974.8 1359.5,980.5 1351.3,986.2" fill="#f2f2f2"/><polygon points="1480,977 1487.5,971 1491.5,971 1489,974 1501,986.8 1498,990 1486,977.2 1483.5,980" fill="#6e6e6e"/><path d="M20,1007.8 V1024.5 H36.8" fill="none" stroke="#6e6e6e" stroke-width="1.6"/><rect x="23.6" y="1005.3" width="15" height="15.3" fill="none" stroke="#6e6e6e" stroke-width="1.6"/><path d="M1821,1005.5 H1841.3 V1019 H1838 V1024.5 L1832.5,1019 H1821 Z" fill="#6e6e6e"/><rect x="1829.8" y="1008" width="2.6" height="6" fill="#f2f2f2"/><rect x="1829.8" y="1015.2" width="2.6" height="2.4" fill="#f2f2f2"/><path d="M1959.5,1013 V1009 A4,4 0 0 1 1967.5,1009 V1011" fill="none" stroke="#6e6e6e" stroke-width="2.2"/><rect x="1963.3" y="1014" width="13" height="10.3" fill="#6e6e6e"/></svg>
<div style="position:absolute;left:960px;top:91px;width:312px;height:131px;background:#fff;border:1px solid #5e5e5e;box-shadow:0 3px 10px rgba(0,0,0,0.22);"></div>
<div style="position:absolute;left:961px;top:98px;width:312px;height:33.3px;background:#2675bf;"></div>
<div style="position:absolute;left:966px;top:141.7px;width:303px;height:1.3px;background:#dcdcdc;"></div>
<div style="position:absolute;left:1016.58px;top:102.90px;font-family:'Liberation Sans';font-size:22.8px;line-height:22.8px;font-weight:400;color:#ffffff;white-space:pre;">Edit Configurations...</div>
<div style="position:absolute;left:980.67px;top:153.61px;font-family:'Liberation Sans';font-size:22.2px;line-height:22.2px;font-weight:700;color:#999999;white-space:pre;">Run Configurations</div>
<div style="position:absolute;left:1017.50px;top:186.67px;font-family:'Liberation Sans';font-size:22.6px;line-height:22.6px;font-weight:400;color:#000000;white-space:pre;">app</div>
<svg style="position:absolute;left:0;top:0" width="1999" height="1030"><g transform="translate(984.0,192.5) scale(1.0000)"><path d="M0,13.5 C0,8 4.3,4 10,4 C15.7,4 20,8 20,13.5 Z" fill="#3ddc84"/><path d="M3.6,0.4 L5.9,4.6 M16.4,0.4 L14.1,4.6" stroke="#3ddc84" stroke-width="1.4" stroke-linecap="round"/><circle cx="6.2" cy="9.4" r="0.95" fill="#ffffff"/><circle cx="13.8" cy="9.4" r="0.95" fill="#ffffff"/></g><polyline points="1242.5,192.3 1249.3,199.2 1242.5,206" fill="none" stroke="#6e6e6e" stroke-width="1.8"/></svg>
</body></html>
